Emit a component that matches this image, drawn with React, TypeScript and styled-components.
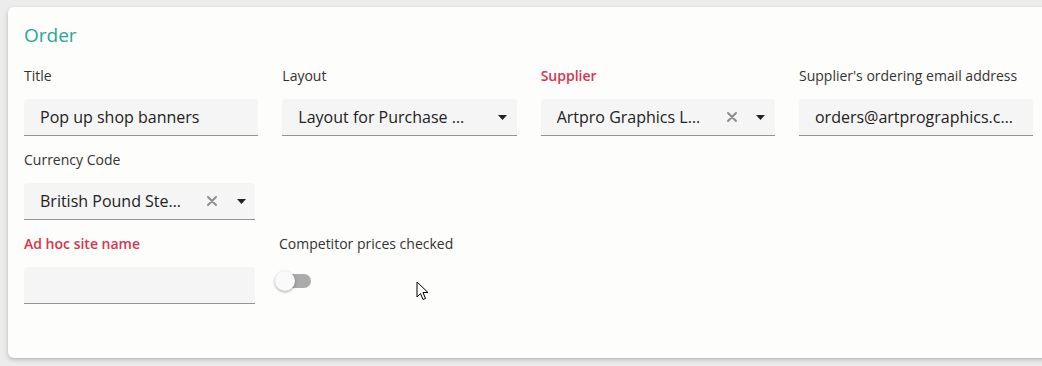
import React from "react";
import styled, { createGlobalStyle } from "styled-components";

const GlobalStyle = createGlobalStyle`
  html, body {
    margin: 0;
    padding: 0;
    background: #ececec;
    overflow: hidden;
  }
  body {
    font-family: "Open Sans", "Noto Sans", sans-serif;
    color: #222;
  }
`;

const Page = styled.div`
  padding: 7px 0 0 8px;
  height: 366px;
  box-sizing: border-box;
`;

const Card = styled.div`
  position: relative;
  width: 1060px;
  height: 351px;
  box-sizing: border-box;
  background: #fdfdfb;
  border-radius: 6px;
  box-shadow: 0 2px 5px rgba(0, 0, 0, 0.18), 0 1px 2px rgba(0, 0, 0, 0.08);
  padding: 16px 16px 0;
`;

const Heading = styled.h2`
  margin: 0 0 20px;
  font-size: 19px;
  line-height: 24px;
  font-weight: 400;
  color: #26a69a;
`;

const Row = styled.div<{ $col: number }>`
  display: grid;
  grid-template-columns: repeat(4, ${(p) => p.$col}px);
  column-gap: 24px;
  margin-bottom: 15px;
`;

const Group = styled.div`
  display: flex;
  flex-direction: column;
`;

const Label = styled.label<{ $required?: boolean }>`
  font-size: 14px;
  line-height: 18px;
  margin-bottom: 14px;
  color: ${(p) => (p.$required ? "#d9344f" : "#333")};
  font-weight: ${(p) => (p.$required ? 600 : 400)};
  white-space: nowrap;
`;

const Field = styled.div`
  display: flex;
  align-items: center;
  height: 36px;
  background: #f5f5f5;
  border-bottom: 1px solid #949494;
  border-radius: 4px 4px 0 0;
  padding: 0 16px;
  font-size: 16px;
  color: #222;
  min-width: 0;
`;

const Value = styled.span`
  flex: 1;
  min-width: 0;
  overflow: hidden;
  white-space: nowrap;
  text-overflow: ellipsis;
`;

const IconButton = styled.span<{ $gap?: number }>`
  display: flex;
  align-items: center;
  justify-content: center;
  width: 12px;
  margin-left: ${(p) => p.$gap ?? 0}px;
  flex: none;
`;

const SelectField = styled(Field)`
  padding-right: 8px;
`;

const SwitchTrack = styled.div`
  position: relative;
  width: 34px;
  height: 14px;
  border-radius: 7px;
  background: #ababab;
  margin: 7px 0 0 -2px;
`;

const SwitchThumb = styled.span`
  position: absolute;
  left: -2px;
  top: -3px;
  width: 20px;
  height: 20px;
  border-radius: 50%;
  background: #fafafa;
  box-shadow: 0 1px 3px rgba(0, 0, 0, 0.35);
`;

const Cursor = styled.svg`
  position: absolute;
  left: 408px;
  top: 274px;
`;

const ClearIcon = () => (
  <svg width="10" height="10" viewBox="0 0 10 10">
    <path d="M1 1 L9 9 M9 1 L1 9" stroke="#8a8a8a" strokeWidth="1.8" strokeLinecap="round" />
  </svg>
);

const ArrowIcon = () => (
  <svg width="9" height="5" viewBox="0 0 9 5">
    <path d="M0 0 H9 L4.5 5 Z" fill="#222" />
  </svg>
);

const Select: React.FC<{ value: string; clearable?: boolean }> = ({ value, clearable }) => (
  <SelectField>
    <Value>{value}</Value>
    {clearable && (
      <IconButton $gap={10}>
        <ClearIcon />
      </IconButton>
    )}
    <IconButton $gap={17}>
      <ArrowIcon />
    </IconButton>
  </SelectField>
);

export default function App() {
  return (
    <Page>
      <GlobalStyle />
      <Card>
        <Heading>Order</Heading>
        <Row $col={234.33}>
          <Group>
            <Label>Title</Label>
            <Field>
              <Value>Pop up shop banners</Value>
            </Field>
          </Group>
          <Group>
            <Label>Layout</Label>
            <Select value="Layout for Purchase …" />
          </Group>
          <Group>
            <Label $required>Supplier</Label>
            <Select value="Artpro Graphics L…" clearable />
          </Group>
          <Group>
            <Label>Supplier's ordering email address</Label>
            <Field>
              <Value>orders@artprographics.c…</Value>
            </Field>
          </Group>
        </Row>
        <Row $col={231}>
          <Group>
            <Label>Currency Code</Label>
            <Select value="British Pound Ste…" clearable />
          </Group>
        </Row>
        <Row $col={231}>
          <Group>
            <Label $required>Ad hoc site name</Label>
            <Field>
              <Value />
            </Field>
          </Group>
          <Group>
            <Label>Competitor prices checked</Label>
            <SwitchTrack>
              <SwitchThumb />
            </SwitchTrack>
          </Group>
        </Row>
        <Cursor width="14" height="21" viewBox="0 0 14 21">
          <path
            d="M1 1 L1 16 L4.5 12.5 L7 18.5 L9.5 17.5 L7 11.5 L12 11.5 Z"
            fill="#fff"
            stroke="#000"
            strokeWidth="1"
            strokeLinejoin="round"
          />
        </Cursor>
      </Card>
    </Page>
  );
}
